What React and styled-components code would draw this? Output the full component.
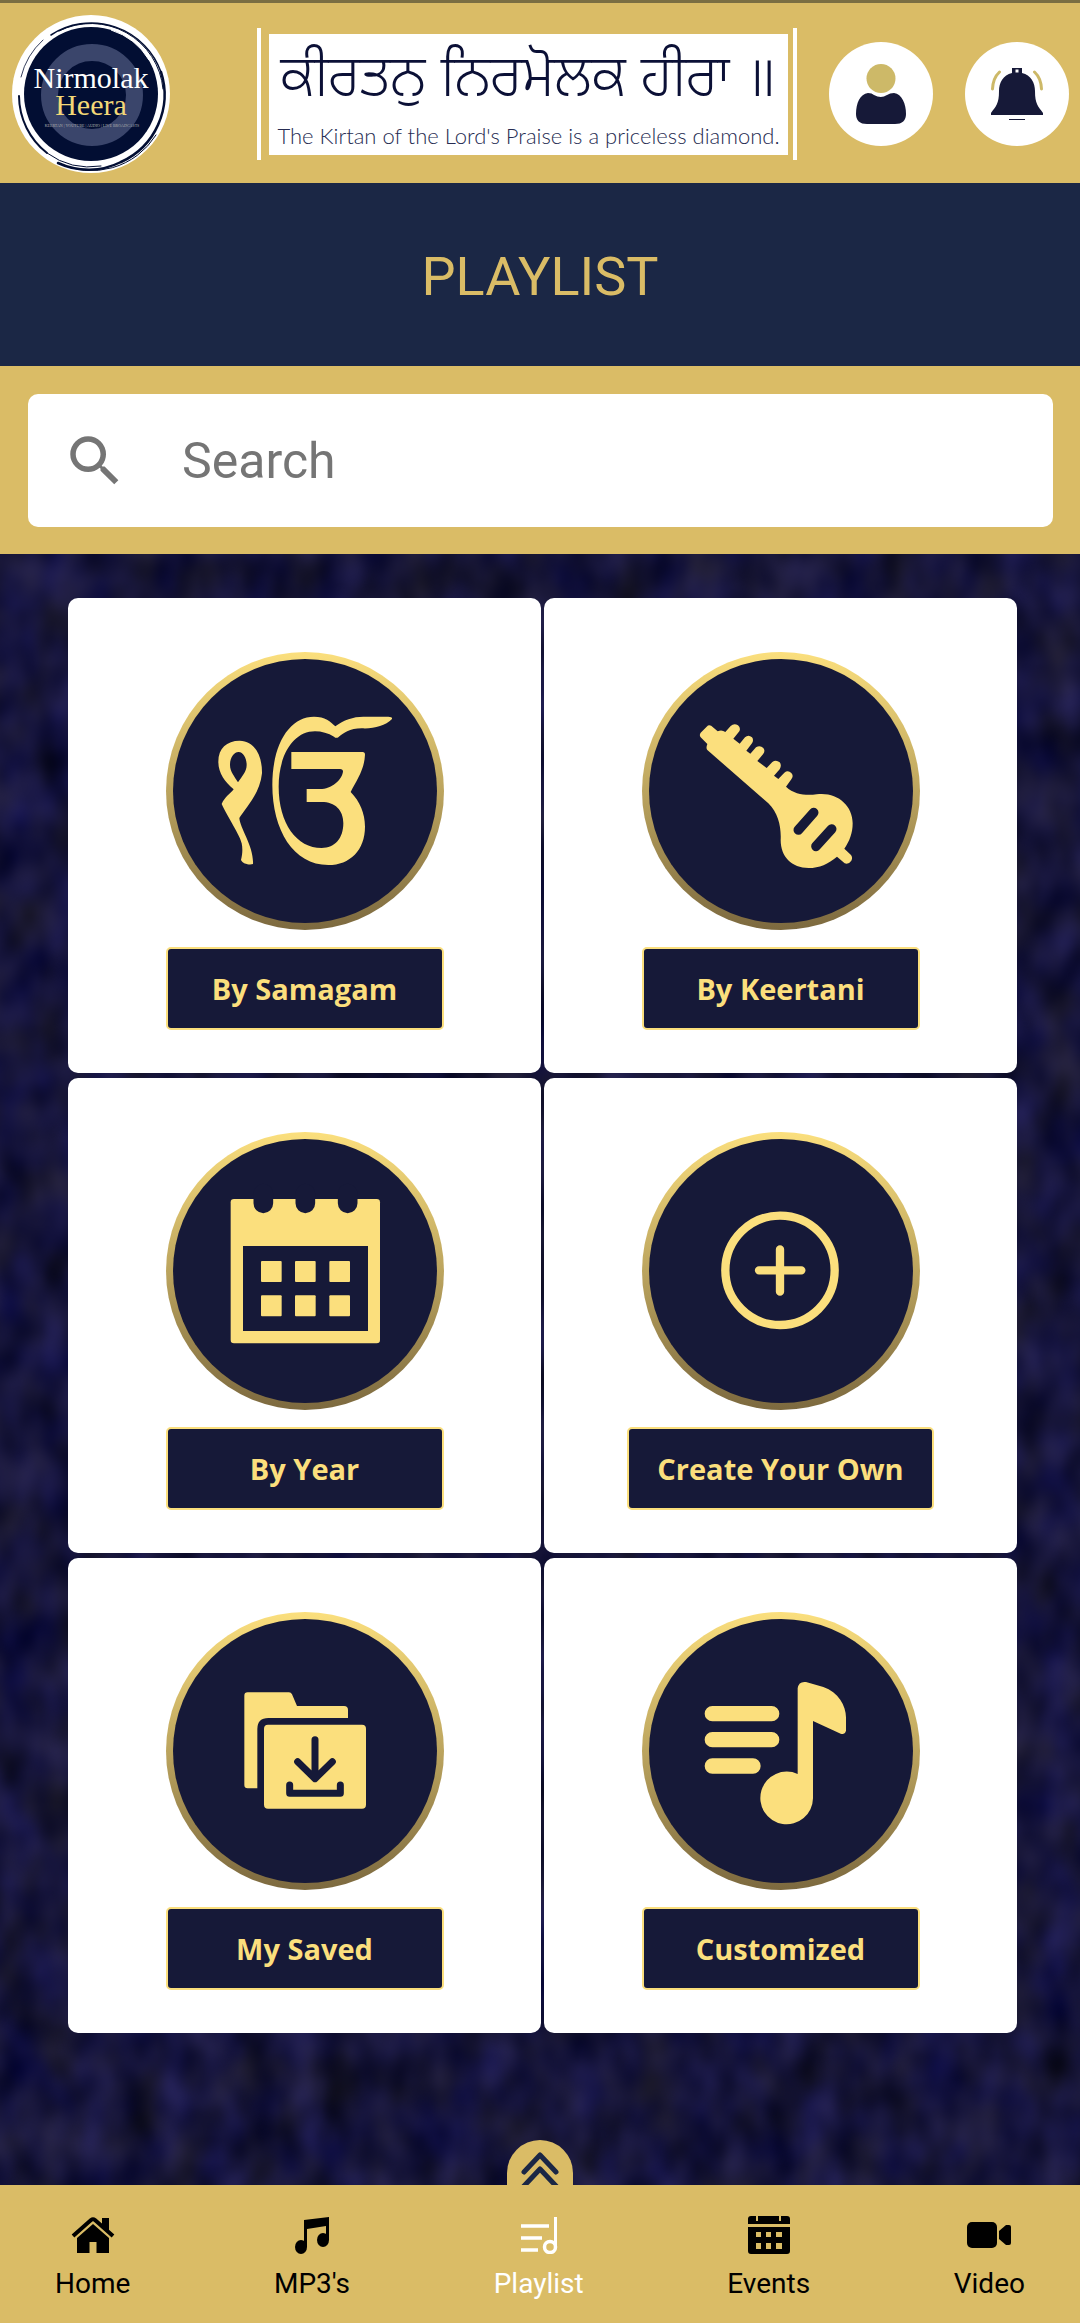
import React from "react";
import styled, { createGlobalStyle } from "styled-components";

const color = {
  gold: "#dabc66",
  goldLight: "#fbdf7d",
  navy: "#161938",
  titleNavy: "#1b2745",
  ink: "#0b1036",
  white: "#ffffff",
  muted: "#757575",
};

const texture = encodeURIComponent(
  `<svg xmlns="http://www.w3.org/2000/svg" width="1080" height="1640">
    <filter id="n" x="0" y="0" width="100%" height="100%" color-interpolation-filters="sRGB">
      <feTurbulence type="fractalNoise" baseFrequency="0.025 0.018" numOctaves="2" seed="8"/>
      <feColorMatrix values="0.18 0 0 0 -0.005  0.16 0 0 0 0  0.2 0.2 0 0 0.025  0 0 0 0 1"/>
    </filter>
    <rect width="1080" height="1640" filter="url(#n)"/>
  </svg>`
);

const GlobalStyle = createGlobalStyle`
  *, *::before, *::after { box-sizing: border-box; }
  body { margin: 0; background: ${color.navy}; }
  button, input { font: inherit; }
`;

const Page = styled.div`
  display: flex;
  flex-direction: column;
  min-height: 100vh;
  font-family: Roboto, sans-serif;
`;

const Header = styled.header`
  display: flex;
  align-items: center;
  height: 183px;
  padding: 2px 11px 0;
  background: ${color.gold};
  border-top: 3px solid #7a6e42;
`;

const Logo = styled.svg`
  display: block;
  flex: none;
  width: 160px;
  height: 160px;
`;

const Banner = styled.div`
  flex: 1;
  height: 132px;
  margin: 0 32px 0 86px;
  padding: 6px 5px 5px 8px;
  border: solid ${color.white};
  border-width: 0 4px;
`;

const BannerPlate = styled.div`
  display: flex;
  flex-direction: column;
  align-items: center;
  justify-content: space-between;
  height: 100%;
  padding: 0 4px 3px;
  overflow: hidden;
  white-space: nowrap;
  background: ${color.white};
`;

const Verse = styled.div`
  color: ${color.ink};
  font-family: "Noto Sans", "Noto Sans Gurmukhi", "Lohit Gurmukhi", "DejaVu Sans", sans-serif;
  font-weight: 300;
  font-size: 57px;
  line-height: 80px;
`;

const Tagline = styled.div`
  color: #262c52;
  font-family: Lato, sans-serif;
  font-weight: 300;
  font-size: 22px;
  line-height: 32px;
`;

const HeaderActions = styled.div`
  display: flex;
  flex: none;
  gap: 32px;
`;

const RoundButton = styled.button`
  width: 104px;
  height: 104px;
  padding: 0;
  border: 0;
  border-radius: 50%;
  background: ${color.white};

  svg { display: block; }
`;

const TitleBar = styled.div`
  display: flex;
  align-items: center;
  justify-content: center;
  height: 183px;
  padding-top: 5px;
  background: ${color.titleNavy};
`;

const Title = styled.h1`
  margin: 0;
  color: ${color.gold};
  font-weight: 400;
  font-size: 54px;
  line-height: 64px;
`;

const SearchBar = styled.div`
  padding: 28px 27px 27px 28px;
  background: ${color.gold};
`;

const SearchField = styled.label`
  display: flex;
  align-items: center;
  gap: 54px;
  height: 133px;
  padding: 0 34px;
  border-radius: 10px;
  background: ${color.white};

  svg { flex: none; }
`;

const SearchInput = styled.input`
  flex: 1;
  min-width: 0;
  padding: 0;
  border: 0;
  outline: 0;
  background: transparent;
  color: #222222;
  font-size: 50px;
  line-height: 64px;

  &::placeholder { color: ${color.muted}; opacity: 1; }
`;

const Main = styled.main`
  flex: 1;
  padding: 44px 63px 152px 68px;
  background: ${color.navy} url("data:image/svg+xml,${texture}");
`;

const Grid = styled.div`
  display: grid;
  grid-template-columns: 1fr 1fr;
  gap: 5px 3px;
`;

const Card = styled.button`
  display: flex;
  flex-direction: column;
  align-items: center;
  gap: 17px;
  padding: 54px 20px 43px;
  border: 0;
  border-radius: 10px;
  background: ${color.white};
`;

const Disc = styled.span`
  display: block;
  width: 278px;
  height: 278px;
  padding: 7px;
  border-radius: 50%;
  background: linear-gradient(${color.goldLight}, #7c693f);
`;

const DiscFace = styled.span`
  display: block;
  width: 264px;
  height: 264px;
  border-radius: 50%;
  background: ${color.navy};

  svg { display: block; }
`;

const CardLabel = styled.span`
  display: flex;
  align-items: center;
  justify-content: center;
  min-width: 278px;
  height: 83px;
  padding: 0 28px;
  border: 2px solid ${color.goldLight};
  border-radius: 5px;
  background: ${color.navy};
  color: ${color.goldLight};
  font-family: "Open Sans", sans-serif;
  font-weight: 700;
  font-size: 29px;
  line-height: 40px;
  white-space: nowrap;
`;

const BottomNav = styled.nav`
  position: relative;
  display: flex;
  justify-content: space-between;
  height: 138px;
  padding: 31px 55px 0;
  background: ${color.gold};
`;

const ExpandTab = styled.button`
  position: absolute;
  bottom: 100%;
  left: 50%;
  width: 66px;
  height: 45px;
  margin-left: -33px;
  padding: 0;
  border: 0;
  border-radius: 33px 33px 0 0;
  background: ${color.gold};

  svg { display: block; }
`;

const NavLink = styled.a`
  display: flex;
  flex-direction: column;
  align-items: center;
  gap: 13px;
  color: ${(p) => (p.$active ? color.white : "#000000")};
  font-size: 28px;
  line-height: 34px;
  text-decoration: none;
`;

function BrandLogo() {
  return (
    <Logo viewBox="10 13 160 160" role="img" aria-label="Nirmolak Heera">
      <circle cx="90" cy="93" r="79" fill="#fff" />
      <circle cx="90" cy="93" r="67" fill="#020e33" />
      <g fill="none" stroke="#020e33" strokeLinecap="round">
        <path d="M58 30A72 72 0 0 1 162 88" strokeWidth="1" />
        <path d="M50 34A74 74 0 0 1 160 71" strokeWidth="1.5" />
        <path d="M160 71A74 74 0 0 1 120 161" strokeWidth="2.5" />
        <path d="M120 161A73 73 0 0 1 57 162" strokeWidth="2.5" />
        <path d="M57 162A76 76 0 0 0 155 134" strokeWidth="1" />
        <path d="M18 95A73 73 0 0 0 46 152" strokeWidth="2" />
        <path d="M20 76A73 73 0 0 1 42 39" strokeWidth="0.8" />
        <path d="M46 152A72 72 0 0 0 100 165" strokeWidth="1" />
      </g>
      <path d="M110 29A68 68 0 0 1 148 59" fill="none" stroke="#fff" strokeWidth="1" />
      <circle cx="91" cy="94" r="42.5" fill="none" stroke="#3a456b" strokeWidth="17" />
      <g fontFamily='"Liberation Serif", serif' textAnchor="middle">
        <text x="90" y="87" fontSize="30" fill="#fff">Nirmolak</text>
        <text x="90" y="114" fontSize="30" fill="#f3d877">Heera</text>
        <text x="91" y="126" fontSize="4" fill="#aeb0ae">KEERTAN | YOUTUBE | AUDIO | LIVE BROADCASTS</text>
      </g>
    </Logo>
  );
}

function PersonIcon() {
  return (
    <svg width="104" height="104" viewBox="0 0 104 104" aria-hidden="true">
      <circle cx="52" cy="36.5" r="14.5" fill="#cdb968" />
      <path
        d="M39 51Q43 51 45 53Q52 57 58 53Q61 51 65 51C73 52 77 62 77 72Q77 82 66 82H38Q27 82 27 72C27 61 31 52 39 51Z"
        fill={color.navy}
      />
    </svg>
  );
}

function BellIcon() {
  return (
    <svg width="104" height="104" viewBox="0 0 104 104" aria-hidden="true">
      <path
        d="M47 26H57V31C66 33 70 41 70 49C70 62 73 64 78 71V73H26V71C31 64 34 62 34 49C34 41 38 33 47 31Z"
        fill={color.navy}
      />
      <path d="M50.5 27.5H53.5V30.5H50.5Z" fill="#fff" />
      <path d="M44 77.5H60" stroke={color.navy} strokeWidth="1" />
      <path d="M27.5 47Q28 36 34.5 30M76.5 47Q76 36 69.5 30" fill="none" stroke="#cdb968" strokeWidth="3" strokeLinecap="round" />
    </svg>
  );
}

function SearchIcon() {
  return (
    <svg width="66" height="66" viewBox="0 0 24 24" fill={color.muted} aria-hidden="true">
      <path d="M15.5 14h-.79l-.28-.27A6.471 6.471 0 0 0 16 9.5 6.5 6.5 0 1 0 9.5 16c1.61 0 3.09-.59 4.23-1.57l.27.28v.79l5 4.99L20.49 19l-4.99-5zm-6 0C7.01 14 5 11.99 5 9.5S7.01 5 9.5 5 14 7.01 14 9.5 11.99 14 9.5 14z" />
    </svg>
  );
}

/* Card drawings share a 792-unit square, three units to the pixel. */
function DiscIcon({ x, y, children }) {
  return (
    <svg width="264" height="264" viewBox={`${x} ${y} 792 792`} fill={color.goldLight} aria-hidden="true">
      {children}
    </svg>
  );
}

const IkOnkar = () => (
  <DiscIcon x={339} y={207}>
    <path
      fillRule="evenodd"
      d="M539 452C585 452 607 500 606 550C600 610 560 650 538 684C540 715 582 770 579 822C570 826 548 822 543 810C548 790 548 775 545 760C540 735 505 685 485 642C495 620 510 612 521 598C495 575 475 550 475 515C475 475 500 452 539 452ZM536 486C520 486 510 505 510 525C510 545 524 560 534 577C545 560 560 545 560 525C560 505 550 486 536 486Z"
    />
    <path d="M694 486H908Q915 486 915 494C913 540 890 570 872 606C900 635 915 670 915 710C915 780 870 825 805 825C700 825 637 720 637 585C637 460 690 380 762 380C795 380 812 395 826 409C850 390 880 380 910 380H985Q998 380 996 387C975 408 940 417 905 415C870 415 848 430 835 442Q828 446 822 440C805 430 785 424 765 424C700 424 656 495 656 590C656 700 710 774 785 774C825 774 850 745 850 700C850 660 825 636 785 636H740V597H780C815 597 845 570 849 545Q849 537 840 537H694Z" />
  </DiscIcon>
);

const Veena = () => (
  <DiscIcon x={327} y={207}>
    <path d="M508 406Q514 406 518 411L533 424Q545 418 556 426L572 408Q582 399 594 406Q603 414 598 424L580 446L599 461L615 442Q625 433 636 442Q642 450 636 460L619 482L631 491L648 472Q660 464 670 474Q677 483 669 493L652 513L680 534L697 516Q708 508 719 517Q726 526 719 538L702 557L715 567L733 548Q744 539 754 549Q762 558 754 568L738 590C765 615 800 617 830 613C890 605 938 645 938 700C938 730 928 755 913 776L933 795Q939 803 934 812Q926 824 914 820L891 800C865 822 838 834 806 834C755 834 722 800 722 750C724 710 715 670 685 640L502 480Q497 474 502 462L482 442Q477 435 482 428L500 410Q504 406 508 406Z" />
    <path d="M821 668L775 720M875 717L828 769" stroke={color.navy} strokeWidth="29" strokeLinecap="round" />
  </DiscIcon>
);

const CalendarDrawing = () => (
  <DiscIcon x={339} y={210}>
    <rect x="512" y="390" width="448" height="433" rx="10" />
    <path d="M610 374V403M736 374V403M863 374V403" stroke={color.navy} strokeWidth="59" strokeLinecap="round" />
    <rect x="549" y="531" width="375" height="255" fill={color.navy} />
    {[576, 679].map((y) => [603, 705, 808].map((x) => <rect key={`${x}-${y}`} x={x} y={y} width="62" height="63" rx="3" />))}
  </DiscIcon>
);

const PlusDrawing = () => (
  <DiscIcon x={327} y={210}>
    <g fill="none" stroke={color.goldLight} strokeWidth="25" strokeLinecap="round">
      <circle cx="720" cy="604" r="164" />
      <path d="M720 541V668M657 604H784" />
    </g>
  </DiscIcon>
);

const SavedDrawing = () => (
  <DiscIcon x={339} y={210}>
    <path d="M553 440Q553 430 563 430H687Q693 430 696 436L711 471H852Q864 471 864 483V507H625Q592 507 592 540V718H563Q553 718 553 708Z" />
    <rect x="612" y="527" width="306" height="252" rx="12" />
    <path
      d="M765 572V688M713 638L765 689L817 638M689 708V733H841V708"
      fill="none"
      stroke={color.navy}
      strokeWidth="21"
      strokeLinecap="round"
      strokeLinejoin="round"
    />
  </DiscIcon>
);

const QueueDrawing = () => (
  <DiscIcon x={327} y={210}>
    <path d="M517 494H695M517 572H695M517 651H639" stroke={color.goldLight} strokeWidth="46" strokeLinecap="round" />
    <path d="M773 675V418Q776 396 798 399L850 414C895 430 918 470 918 505V545Q914 558 902 554L819 516V748A79 79 0 1 1 773 675Z" />
  </DiscIcon>
);

const HomeIcon = () => (
  <>
    <path d="M2 20L20 4Q22 2.5 24 4L42 20" fill="none" stroke="currentColor" strokeWidth="4" />
    <path d="M31 2H38V16L31 10Z" />
    <path d="M22 8L38 22V37H25.5V26H18.5V37H6V22Z" />
  </>
);

const NotesIcon = () => (
  <>
    <path d="M14 4L39 1V24H36V10L17 13V31H14Z" />
    <ellipse cx="11" cy="31" rx="6" ry="7" />
    <ellipse cx="33" cy="24" rx="6" ry="7" />
  </>
);

const PlaylistIcon = () => (
  <g fill="none" stroke="currentColor">
    <path d="M4 10H32M4 22H25M4 34H21" strokeWidth="3.5" />
    <path d="M38.5 1V31" strokeWidth="3" />
    <circle cx="33" cy="31" r="5.5" strokeWidth="3.5" />
  </g>
);

const EventsIcon = () => (
  <path
    fillRule="evenodd"
    d="M4 0H9V5H11V0H32V5H34V0H40Q43 0 43 3V8H1V3Q1 0 4 0ZM1 11H43V35Q43 38 40 38H4Q1 38 1 35ZM9 16V21H14V16ZM19 16V21H24V16ZM29 16V21H35V16ZM9 27V33H14V27ZM19 27V33H24V27ZM29 27V33H35V27Z"
  />
);

const VideoIcon = () => (
  <>
    <rect x="0" y="6" width="30" height="26" rx="5" />
    <path d="M32 15L39 9H42Q44 9 44 11V27Q44 29 42 29H39L32 23Z" />
  </>
);

const cards = [
  { label: "By Samagam", Drawing: IkOnkar },
  { label: "By Keertani", Drawing: Veena },
  { label: "By Year", Drawing: CalendarDrawing },
  { label: "Create Your Own", Drawing: PlusDrawing },
  { label: "My Saved", Drawing: SavedDrawing },
  { label: "Customized", Drawing: QueueDrawing },
];

const tabs = [
  { label: "Home", Icon: HomeIcon },
  { label: "MP3's", Icon: NotesIcon },
  { label: "Playlist", Icon: PlaylistIcon, active: true },
  { label: "Events", Icon: EventsIcon },
  { label: "Video", Icon: VideoIcon },
];

export default function App() {
  return (
    <Page>
      <GlobalStyle />
      <Header>
        <BrandLogo />
        <Banner>
          <BannerPlate>
            <Verse lang="pa">ਕੀਰਤਨੁ ਨਿਰਮੋਲਕ ਹੀਰਾ ॥</Verse>
            <Tagline>The Kirtan of the Lord's Praise is a priceless diamond.</Tagline>
          </BannerPlate>
        </Banner>
        <HeaderActions>
          <RoundButton type="button" aria-label="Profile"><PersonIcon /></RoundButton>
          <RoundButton type="button" aria-label="Notifications"><BellIcon /></RoundButton>
        </HeaderActions>
      </Header>

      <TitleBar>
        <Title>PLAYLIST</Title>
      </TitleBar>

      <SearchBar>
        <SearchField>
          <SearchIcon />
          <SearchInput type="text" placeholder="Search" aria-label="Search" />
        </SearchField>
      </SearchBar>

      <Main>
        <Grid>
          {cards.map(({ label, Drawing }) => (
            <Card key={label} type="button">
              <Disc><DiscFace><Drawing /></DiscFace></Disc>
              <CardLabel>{label}</CardLabel>
            </Card>
          ))}
        </Grid>
      </Main>

      <BottomNav>
        <ExpandTab type="button" aria-label="Expand">
          <svg width="66" height="45" viewBox="0 0 66 45" fill="none" stroke={color.titleNavy} strokeWidth="5" strokeLinecap="round" strokeLinejoin="round" aria-hidden="true">
            <path d="M17 32L33 15L49 32M17 46L33 29L49 46" />
          </svg>
        </ExpandTab>
        {tabs.map(({ label, Icon, active }) => (
          <NavLink key={label} href={`#${label.toLowerCase()}`} $active={active} aria-current={active ? "page" : undefined}>
            <svg width="44" height="38" viewBox="0 0 44 38" fill="currentColor" aria-hidden="true"><Icon /></svg>
            {label}
          </NavLink>
        ))}
      </BottomNav>
    </Page>
  );
}
